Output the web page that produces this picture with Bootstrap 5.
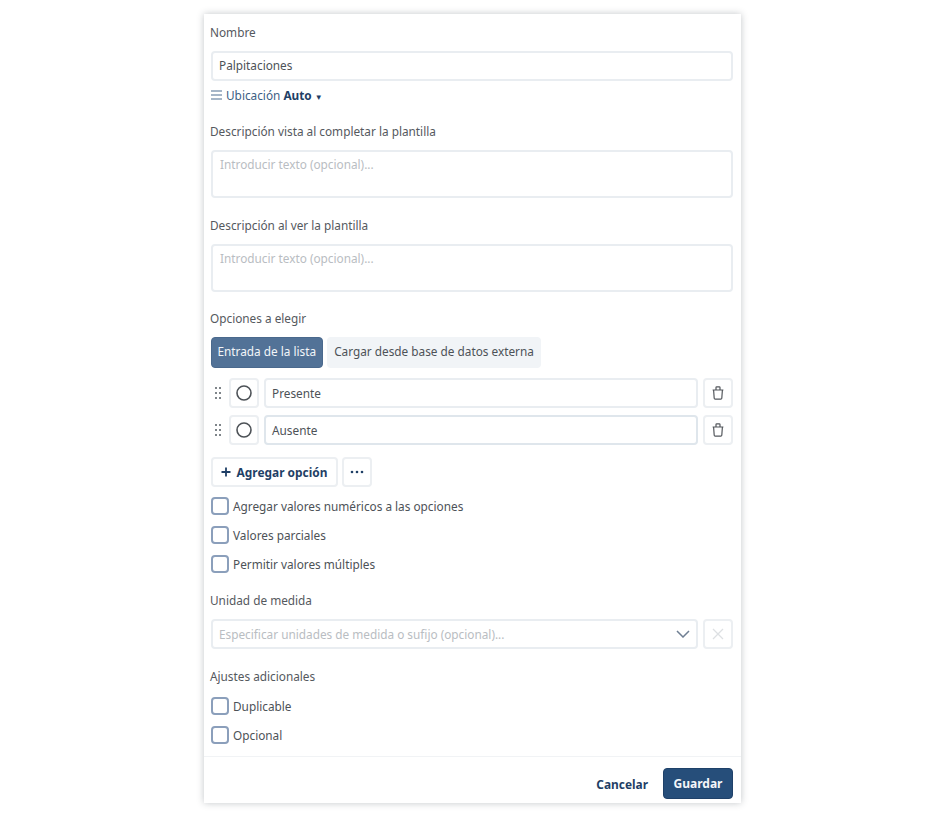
<!DOCTYPE html>
<html lang="es">
<head>
<meta charset="utf-8">
<title>Palpitaciones</title>
<link href="https://cdn.jsdelivr.net/npm/bootstrap@5.3.0/dist/css/bootstrap.min.css" rel="stylesheet">
<style>
html,body{height:817px;overflow:hidden;background:#fff}
body{font-family:"Noto Sans","Open Sans",sans-serif;font-size:11.8px;line-height:18px;color:#4d5257;padding-top:14px}
.sheet{width:537px;height:789px;margin-left:204px;background:#fff;box-shadow:0 0 7px rgba(40,50,60,.28);padding:10px 8px 0 7px}
.sheet>*{flex:none}
.fld-label{display:block;margin:0 0 0 -1px;padding-bottom:2px;color:#55595e;line-height:16px}
.fld{display:block;width:100%;height:30px;border:2px solid #e9edf1;border-radius:4px;background:#fff;padding:0 6px;line-height:26px;color:#4d5257}
.fld-name{line-height:24px}
.fld-area{height:48px;padding:3px 7px;line-height:18px;color:#b9bdc2}
.gap-9{margin-top:9px}
.place{color:#3d5f85;margin-top:5px;height:18px}
.place-txt{padding-top:1px}
.place b{color:#1f3f66;font-weight:700}
.place i{font-style:normal;font-size:8px;color:#1f3f66}
.sec{margin-top:19px}
.sec-18{margin-top:18px}
.seg-line{margin-top:9px}
.seg{height:31px;border-radius:4px;line-height:27px;border:1px solid transparent}
.seg-on{background:#527297;color:#f3f6f9;border-color:#4a698d;padding:0 5.5px}
.seg-off{background:#f1f4f7;color:#4d5257;padding:0 6.5px}
.grip{width:13px;flex:none;display:flex;justify-content:center}
.sq{width:30px;height:30px;flex:none;border:2px solid #eceff2;border-radius:4px;background:#fff;display:flex;align-items:center;justify-content:center}
.opt-row{height:30px;gap:5px}
.opt-row .fld{flex:1;width:auto}
.opt-row .fld-focus{border-color:#dfe6ec}
.opt-first{margin-top:10px}
.opt-second{margin-top:7px}
.add-line{margin-top:12px}
.add-btn{height:30px;width:127px;border:2px solid #eceff2;border-radius:4px;background:#fff;color:#1f3f66;font-weight:700;font-size:11.9px;display:flex;align-items:center;justify-content:center;gap:6px;padding:0 1px 0 0}
.chk-row{height:18px;gap:4px;color:#4d5257;margin-top:11px}
.chk-first{margin-top:10px}
.chk-box{width:18px;height:18px;flex:none;border:2px solid #8b9fbb;border-radius:4px;background:#fff}
.unit-line{gap:5px}
.sel{flex:1;height:30px;border:2px solid #e9edf1;border-radius:4px;padding:0 6px;line-height:26px;color:#b9bdc2;display:flex;align-items:center;justify-content:space-between}
.foot{border-top:1px solid #f1f3f5;margin:12px -8px 0 -7px;height:46px;padding:11px 8px 0 0;gap:15px}
.lnk{color:#1f3f66;font-weight:700;font-size:11.9px;line-height:32px}
.save{height:31px;width:70px;background:#264e7a;border:1px solid #1f4169;border-radius:4px;color:#f4f6f9;font-weight:700;font-size:12px;padding:1px 0 0}
</style>
</head>
<body>
<div class="sheet d-flex flex-column">
  <label class="fld-label">Nombre</label>
  <div class="fld fld-name gap-9">Palpitaciones</div>
  <div class="place d-flex align-items-center gap-1">
    <svg width="11" height="10" viewBox="0 0 11 10" fill="none" stroke="#4f6f92" stroke-width="1.2"><path d="M0 1h11M0 5h11M0 9h11"/></svg>
    <span class="place-txt">Ubicación <b>Auto</b> <i>▼</i></span>
  </div>

  <label class="fld-label sec">Descripción vista al completar la plantilla</label>
  <div class="fld fld-area gap-9">Introducir texto (opcional)...</div>
  <label class="fld-label sec">Descripción al ver la plantilla</label>
  <div class="fld fld-area gap-9">Introducir texto (opcional)...</div>

  <label class="fld-label sec-18">Opciones a elegir</label>
  <div class="d-flex gap-1 seg-line">
    <div class="seg seg-on">Entrada de la lista</div>
    <div class="seg seg-off">Cargar desde base de datos externa</div>
  </div>

  <div class="d-flex align-items-center opt-row opt-first">
    <span class="grip"><svg width="8" height="14" viewBox="0 0 8 14" fill="#555c63"><circle cx="2" cy="2" r="1"/><circle cx="6" cy="2" r="1"/><circle cx="2" cy="7" r="1"/><circle cx="6" cy="7" r="1"/><circle cx="2" cy="12" r="1"/><circle cx="6" cy="12" r="1"/></svg></span>
    <span class="sq"><svg width="16" height="16" viewBox="0 0 16 16" fill="none" stroke="#4d5257" stroke-width="1.6"><circle cx="8" cy="8" r="7"/></svg></span>
    <div class="fld">Presente</div>
    <span class="sq"><svg width="12" height="14" viewBox="0 0 12 14" fill="none" stroke="#53575c" stroke-width="1.2" stroke-linejoin="round"><path d="M1.6 4h8.8l-.6 8.2a1 1 0 0 1-1 .9H3.2a1 1 0 0 1-1-.9zM.6 4h10.8M4 4V1.6a.8.8 0 0 1 .8-.8h2.4a.8.8 0 0 1 .8.8V4"/></svg></span>
  </div>
  <div class="d-flex align-items-center opt-row opt-second">
    <span class="grip"><svg width="8" height="14" viewBox="0 0 8 14" fill="#555c63"><circle cx="2" cy="2" r="1"/><circle cx="6" cy="2" r="1"/><circle cx="2" cy="7" r="1"/><circle cx="6" cy="7" r="1"/><circle cx="2" cy="12" r="1"/><circle cx="6" cy="12" r="1"/></svg></span>
    <span class="sq"><svg width="16" height="16" viewBox="0 0 16 16" fill="none" stroke="#4d5257" stroke-width="1.6"><circle cx="8" cy="8" r="7"/></svg></span>
    <div class="fld fld-focus">Ausente</div>
    <span class="sq"><svg width="12" height="14" viewBox="0 0 12 14" fill="none" stroke="#53575c" stroke-width="1.2" stroke-linejoin="round"><path d="M1.6 4h8.8l-.6 8.2a1 1 0 0 1-1 .9H3.2a1 1 0 0 1-1-.9zM.6 4h10.8M4 4V1.6a.8.8 0 0 1 .8-.8h2.4a.8.8 0 0 1 .8.8V4"/></svg></span>
  </div>

  <div class="d-flex gap-1 add-line">
    <button class="add-btn" type="button"><svg width="10" height="10" viewBox="0 0 10 10" stroke="#1f3f66" stroke-width="1.8"><path d="M5 .5v9M.5 5h9"/></svg>Agregar opción</button>
    <span class="sq"><svg width="14" height="4" viewBox="0 0 14 4" fill="#1f3f66"><circle cx="2" cy="2" r="1.3"/><circle cx="7" cy="2" r="1.3"/><circle cx="12" cy="2" r="1.3"/></svg></span>
  </div>

  <div class="d-flex align-items-center chk-row chk-first"><span class="chk-box"></span>Agregar valores numéricos a las opciones</div>
  <div class="d-flex align-items-center chk-row"><span class="chk-box"></span>Valores parciales</div>
  <div class="d-flex align-items-center chk-row"><span class="chk-box"></span>Permitir valores múltiples</div>

  <label class="fld-label sec">Unidad de medida</label>
  <div class="d-flex gap-9 unit-line">
    <div class="sel"><span>Especificar unidades de medida o sufijo (opcional)...</span><svg width="14" height="8" viewBox="0 0 14 8" fill="none" stroke="#6f7f93" stroke-width="1.5"><path d="M1 1l6 6 6-6"/></svg></div>
    <span class="sq"><svg width="12" height="12" viewBox="0 0 12 12" fill="none" stroke="#dde0e3" stroke-width="1.3"><path d="M1 1l10 10M11 1L1 11"/></svg></span>
  </div>

  <label class="fld-label sec">Ajustes adicionales</label>
  <div class="d-flex align-items-center chk-row"><span class="chk-box"></span>Duplicable</div>
  <div class="d-flex align-items-center chk-row"><span class="chk-box"></span>Opcional</div>

  <div class="foot d-flex justify-content-end align-items-start">
    <span class="lnk">Cancelar</span>
    <button class="save" type="button">Guardar</button>
  </div>
</div>
<script src="https://cdn.jsdelivr.net/npm/bootstrap@5.3.0/dist/js/bootstrap.bundle.min.js"></script>
</body>
</html>
